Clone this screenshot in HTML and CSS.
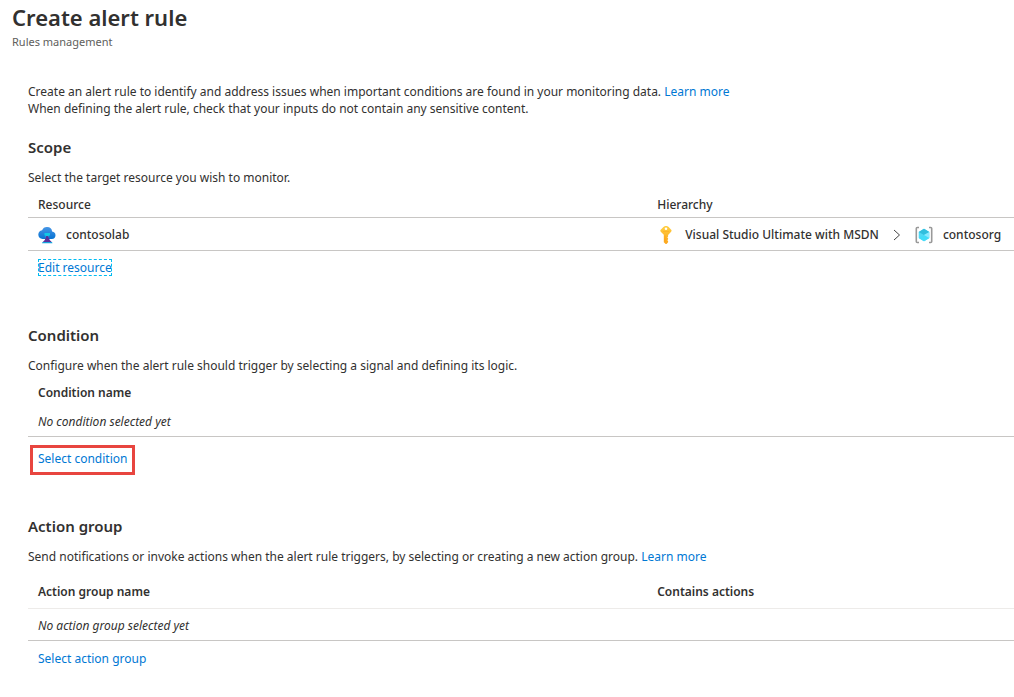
FILE: index.html
```
<!DOCTYPE html>
<html lang="en">
<head>
<meta charset="utf-8">
<title>Create alert rule</title>
<link rel="stylesheet" href="styles.css">
</head>
<body>
<header class="page-header">
  <h1 class="page-title">Create alert rule</h1>
  <p class="page-subtitle">Rules management</p>
</header>
<main class="content">
  <p class="intro">Create an alert rule to identify and address issues when important conditions are found in your monitoring data. <a class="link" href="#">Learn more</a><br>When defining the alert rule, check that your inputs do not contain any sensitive content.</p>

  <section class="section">
    <h2 class="section-title">Scope</h2>
    <p class="section-text">Select the target resource you wish to monitor.</p>
    <table class="grid scope-grid">
      <thead>
        <tr><th class="name-col">Resource</th><th>Hierarchy</th></tr>
      </thead>
      <tbody>
        <tr>
          <td>
            <div class="item">
              <svg class="icon" viewBox="0 0 18 18" aria-hidden="true">
                <defs><linearGradient id="cloud" x1="0" y1="0" x2="0" y2="1"><stop offset="0" stop-color="#4796e6"/><stop offset="1" stop-color="#0873d2"/></linearGradient></defs>
                <path fill="url(#cloud)" d="M17.500 9.200a3.900 3.900 0 0 0-3.400-3.800A5 5 0 0 0 9 .9a5.100 5.100 0 0 0-4.900 3.400A4.700 4.700 0 0 0 .3 8.800a4.500 4.500 0 0 0 4.700 4.100h8.600a3.800 3.800 0 0 0 3.900-3.700z"/>
                <path fill="#12c8e6" d="M6.500 7h5.500v2.500h-1.200V14H7.500V9.500h-1z"/>
                <path fill="#5a2f9c" d="M8.200 10h2l1.500 4 2 2H4.800l2-2z"/>
                <path fill="#17a5dd" d="M4.500 16h9.500l.5 1.200H4z"/>
              </svg>
              <span>contosolab</span>
            </div>
          </td>
          <td>
            <div class="item">
              <svg class="icon" viewBox="0 0 18 18" aria-hidden="true">
                <defs><linearGradient id="key" x1="0" y1="0" x2="0" y2="1"><stop offset="0" stop-color="#ffcf42"/><stop offset="1" stop-color="#fca61e"/></linearGradient></defs>
                <path fill="url(#key)" fill-rule="evenodd" d="M13.900 3.500 11.700 1.100a3.500 3.500 0 0 0-5.300 0L4 3.500a1.600 1.600 0 0 0 0 2.400l2.800 2.900v7.500L8.700 18h.8l1.600-1.700v-1.200l-.8-.9.8-.9v-1l-.8-.9.8-.9V8.900l2.800-3a1.600 1.600 0 0 0 0-2.400zM9 1.500a1.300 1.300 0 1 1 0 2.600 1.300 1.300 0 0 1 0-2.600z"/>
                <path fill="#ff9300" opacity=".5" d="M7.600 9.500h.8v6.200l-.8-.7zM6 5.400h6v.7H6z"/>
              </svg>
              <span>Visual Studio Ultimate with MSDN</span>
              <svg class="chevron" viewBox="0 0 8 12" aria-hidden="true"><path fill="none" stroke="#444" d="M1 1l5.500 5L1 11"/></svg>
              <svg class="icon" viewBox="0 0 18 18" aria-hidden="true">
                <path fill="none" stroke="#999" stroke-width="1.600" d="M4 1.500H2.300q-1 0-1 1v13q0 1 1 1H4M14 1.500h1.700q1 0 1 1v13q0 1-1 1H14"/>
                <path fill="#50d8f5" d="M9 2.800l5.300 3.100v6.200L9 15.200l-5.300-3.100V5.900z"/>
                <path fill="#32bedd" d="M9 2.800l5.300 3.100L9 9 3.700 5.900z"/>
                <path fill="#8ce8ff" d="M9 9l5.300-3.100v6.200L9 15.200z"/>
                <path fill="#43dcf8" d="M3.700 12.100L9 9v6.200zM14.300 12.100L9 9v6.200z"/>
              </svg>
              <span>contosorg</span>
            </div>
          </td>
        </tr>
      </tbody>
    </table>
    <div class="action"><a class="link focused" href="#">Edit resource</a></div>
  </section>

  <section class="section">
    <h2 class="section-title">Condition</h2>
    <p class="section-text">Configure when the alert rule should trigger by selecting a signal and defining its logic.</p>
    <table class="grid condition-grid">
      <thead><tr><th>Condition name</th></tr></thead>
      <tbody><tr><td class="empty">No condition selected yet</td></tr></tbody>
    </table>
    <div class="action action-marked"><a class="link marked" href="#">Select condition</a></div>
  </section>

  <section class="section">
    <h2 class="section-title">Action group</h2>
    <p class="section-text">Send notifications or invoke actions when the alert rule triggers, by selecting or creating a new action group. <a class="link" href="#">Learn more</a></p>
    <table class="grid group-grid">
      <thead><tr><th class="name-col">Action group name</th><th>Contains actions</th></tr></thead>
      <tbody><tr><td class="empty" colspan="2">No action group selected yet</td></tr></tbody>
    </table>
    <div class="action"><a class="link" href="#">Select action group</a></div>
  </section>
</main>
</body>
</html>
```
FILE: styles.css
```
* {
  box-sizing: border-box;
}

body {
  margin: 0;
  background: #fff;
  color: #323130;
  font: 12px/18px "Segoe UI", "Noto Sans", "Open Sans", sans-serif;
}

h1, h2, p {
  margin: 0;
}

.page-header {
  padding: 1px 12px 0;
}

.page-title {
  font-size: 22px;
  line-height: 32px;
  font-weight: 600;
}

.page-subtitle {
  color: #605e5c;
  font-size: 11px;
  line-height: 18px;
}

.content {
  padding: 32px 0 16px 28px;
}

.intro {
  line-height: 17px;
}

.link {
  color: #0078d4;
  text-decoration: none;
}

.section {
  margin-bottom: 46px;
}

.section:last-child {
  margin-bottom: 0;
}

.intro + .section {
  margin-top: 18px;
}

.section-title {
  font-size: 15px;
  line-height: 24px;
  font-weight: 600;
}

.section-text {
  margin: 10px 0 5px;
}

.grid {
  width: 100%;
  border-collapse: separate;
  border-spacing: 0;
  table-layout: fixed;
}

.grid th,
.grid td {
  height: 32px;
  padding: 0 10px;
  text-align: left;
  vertical-align: middle;
  font-weight: 500;
}

.grid th {
  height: 26px;
}

.grid td {
  padding-top: 2px;
  border-bottom: 1px solid #c8c6c4;
}

.grid .name-col {
  width: 62.8%;
}

.scope-grid th {
  border-bottom: 1px solid #c8c6c4;
}

.scope-grid td {
  height: 33px;
}

.condition-grid th,
.group-grid th {
  font-weight: 600;
}

.condition-grid td {
  height: 31px;
}

.group-grid {
  margin: 9px 0;
}

.group-grid th {
  height: 34px;
  border-bottom: 1px solid #edebe9;
}

.grid .empty {
  font-style: italic;
  font-weight: 400;
}

.item {
  display: flex;
  align-items: center;
  gap: 10px;
  white-space: nowrap;
}

.icon {
  flex: none;
  width: 18px;
  height: 18px;
}

.chevron {
  flex: none;
  width: 8px;
  height: 12px;
  margin: 0 4px;
}

.action {
  padding: 8px 10px 0;
}

.action-marked {
  padding-top: 13px;
}

.group-grid + .action {
  padding-top: 0;
}

.focused {
  outline: 1px dashed #00bcf2;
  outline-offset: -1px;
}

.marked {
  position: relative;
}

.marked::after {
  content: "";
  position: absolute;
  inset: -5px -8px -8px;
  border: 3px solid #e8453f;
}
```
